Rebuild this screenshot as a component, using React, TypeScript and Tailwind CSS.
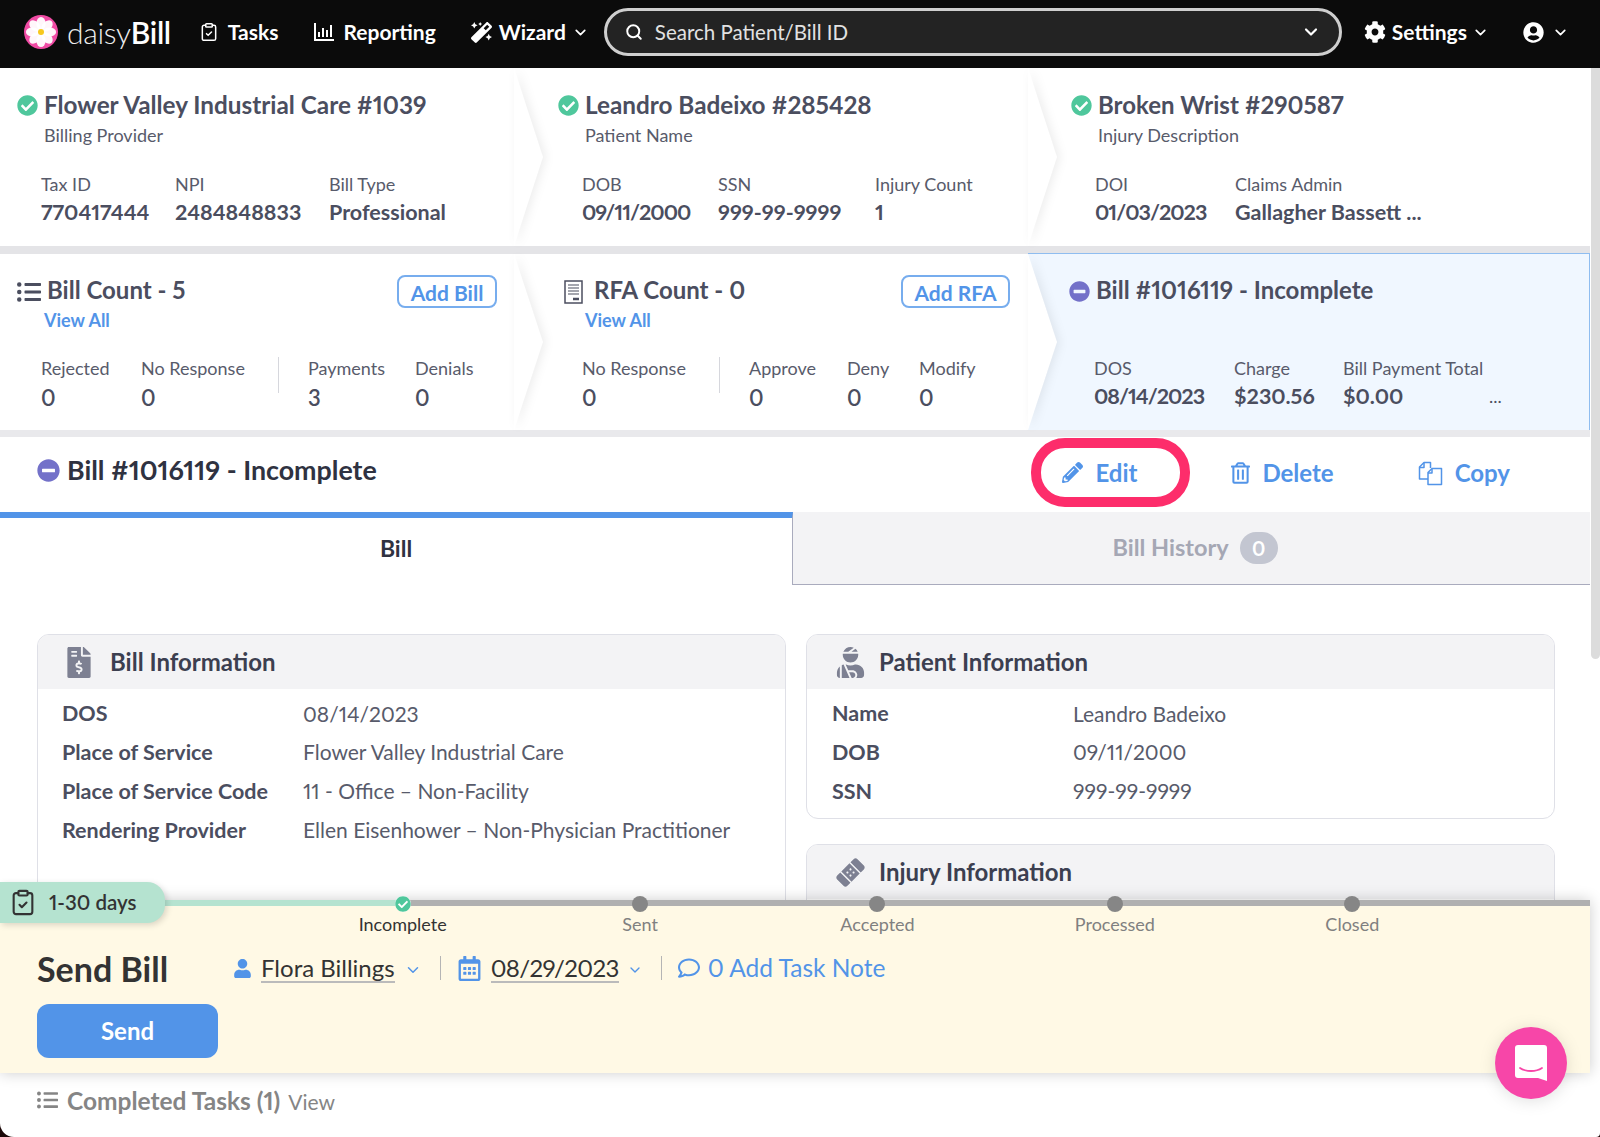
import React from 'react';
import {
  FaBandAid,
  FaCheckCircle,
  FaCog,
  FaFileInvoiceDollar,
  FaListUl,
  FaMagic,
  FaMinusCircle,
  FaPencilAlt,
  FaRegCalendarAlt,
  FaRegComment,
  FaRegTrashAlt,
  FaUser,
  FaUserCircle,
  FaUserInjured,
} from 'react-icons/fa';
import { ChevronDown, ClipboardCheck, Search } from 'lucide-react';

const Wedge = () => (
  <svg
    viewBox="0 0 29 100"
    preserveAspectRatio="none"
    className="absolute top-0 right-[-29px] z-10 h-full w-[29px] overflow-visible drop-shadow-[3px_0_5px_rgba(0,0,0,0.07)]"
  >
    <polygon points="0,0 29,50 0,100" fill="#fff" />
  </svg>
);

const Field = ({ label, value, w, date }: { label: string; value: string; w?: string; date?: boolean }) => (
  <div className={w}>
    <div className="text-[18px] leading-[22px] text-[#585b6b] whitespace-nowrap">{label}</div>
    <div className={`mt-[4px] text-[21.5px] leading-[26px] font-bold text-[#4b4e5f] whitespace-nowrap ${date ? 'tracking-[-1px]' : ''}`}>
      {value}
    </div>
  </div>
);

const Count = ({ label, value, w }: { label: string; value: string; w?: string }) => (
  <div className={w}>
    <div className="text-[18px] leading-[22px] text-[#585b6b] whitespace-nowrap">{label}</div>
    <div className="mt-[6px] text-[22px] leading-[26px] font-semibold text-[#4b4e5f] whitespace-nowrap">{value}</div>
  </div>
);

const TopCell = ({ title, sub, pad, children }: { title: string; sub: string; pad: string; children: React.ReactNode }) => (
  <div className={`relative w-[514px] h-full bg-white pt-[24px] ${pad}`}>
    <div className="flex items-center h-[26px] -ml-[24px]">
      <FaCheckCircle className="w-[21px] h-[21px] text-[#4fc79c] shrink-0" />
      <span className="ml-[6px] text-[24.3px] font-bold text-[#4b4e5f] whitespace-nowrap">{title}</span>
    </div>
    <div className="mt-[6px] ml-[3px] text-[18px] leading-[22px] text-[#585b6b]">{sub}</div>
    <div className="mt-[27px] flex">{children}</div>
    <Wedge />
  </div>
);

const AddButton = ({ label, w }: { label: string; w: string }) => (
  <button className={`h-[33px] rounded-[8px] border-2 border-[#77adee] bg-white pb-[3px] text-[21px] font-bold text-[#5294e8] ${w}`}>
    {label}
  </button>
);

const Row = ({ label, value }: { label: string; value: string }) => (
  <div className="flex h-[38.8px] items-center text-[21px]">
    <div className="w-[241px] text-[21.5px] font-bold text-[#4b4e5f] whitespace-nowrap">{label}</div>
    <div className="text-[#585b6b] whitespace-nowrap">{value}</div>
  </div>
);

const InfoCard = ({
  icon,
  title,
  className,
  children,
}: {
  icon: React.ReactNode;
  title: string;
  className?: string;
  children?: React.ReactNode;
}) => (
  <div className={`rounded-[12px] border border-[#dfe0e7] bg-white overflow-hidden ${className ?? ''}`}>
    <div className="flex h-[54px] items-center bg-[#f3f3f5] pl-[29px]">
      <div className="w-[43px] shrink-0">{icon}</div>
      <span className="text-[24px] font-bold text-[#3c3f50]">{title}</span>
    </div>
    {children}
  </div>
);

const NavItem = ({ icon, label, className }: { icon: React.ReactNode; label: string; className?: string }) => (
  <div className={`flex items-center text-[21px] font-bold text-white ${className ?? ''}`}>
    {icon}
    <span>{label}</span>
  </div>
);

const steps = ['Incomplete', 'Sent', 'Accepted', 'Processed', 'Closed'];

export default function App() {
  return (
    <div className="relative h-[1137px] w-[1600px] overflow-hidden bg-[#1c0808] font-['Lato',sans-serif] proportional-nums">
      <div className="flex h-full flex-col overflow-hidden rounded-bl-[14px] rounded-br-[4px] bg-white">
        <header className="flex h-[68px] shrink-0 items-center bg-[#0b0b0b] pb-[4px] pl-[24px]">
          <svg viewBox="0 0 34 34" className="h-[34px] w-[34px] shrink-0">
            <circle cx="17" cy="17" r="17" fill="#f04ba4" />
            {[0, 45, 90, 135, 180, 225, 270, 315].map((a) => (
              <ellipse key={a} cx="17" cy="8.5" rx="4.6" ry="6.6" fill="#fff" opacity="0.95" transform={`rotate(${a} 17 17)`} />
            ))}
            <circle cx="17" cy="17" r="3" fill="#f7c81e" />
          </svg>
          <div className="ml-[9px] text-[30px] font-light tracking-[-0.3px] text-[#eee]">
            daisy<span className="font-semibold text-white">Bill</span>
          </div>
          <NavItem
            className="ml-[28px]"
            icon={<ClipboardCheck className="mr-[9px] h-[24px] w-[20px]" strokeWidth={1.8} />}
            label="Tasks"
          />
          <NavItem
            className="ml-[36px]"
            icon={
              <svg viewBox="0 0 20 18" className="mr-[9px] h-[18px] w-[20px]" fill="#fff">
                <path d="M0 0h2v16h18v2H0z" />
                <path d="M4 9h2v5H4zM8 5h2v9H8zM12 7h2v7h-2zM16 2h2v12h-2z" />
              </svg>
            }
            label="Reporting"
          />
          <NavItem className="ml-[35px]" icon={<FaMagic className="mr-[7px] h-[21px] w-[21px]" />} label="Wizard" />
          <ChevronDown className="ml-[6px] h-[17px] w-[17px] text-white" strokeWidth={2.4} />
          <div className="ml-[15px] flex h-[48px] w-[738px] items-center rounded-full border-[3px] border-[#cfcfcf] bg-[#232323] pl-[18px] pr-[18px]">
            <Search className="h-[18px] w-[18px] text-white" strokeWidth={2.6} />
            <span className="ml-[12px] text-[20.5px] text-[#e2e2e2]">Search Patient/Bill ID</span>
            <ChevronDown className="ml-auto h-[20px] w-[20px] text-white" strokeWidth={2.6} />
          </div>
          <NavItem className="ml-[22px]" icon={<FaCog className="mr-[6px] h-[22px] w-[22px]" />} label="Settings" />
          <ChevronDown className="ml-[5px] h-[17px] w-[17px] text-white" strokeWidth={2.4} />
          <FaUserCircle className="ml-[34px] h-[21px] w-[21px] text-white" />
          <ChevronDown className="ml-[8px] h-[17px] w-[17px] text-white" strokeWidth={2.4} />
        </header>

        <div className="flex min-h-0 flex-1">
          <main className="flex w-[1590px] flex-col">
            <div className="flex min-h-0 flex-1 flex-col overflow-hidden">
              <div className="flex h-[178px] shrink-0">
                <TopCell title="Flower Valley Industrial Care #1039" sub="Billing Provider" pad="pl-[41px]">
                  <Field label="Tax ID" value="770417444" w="w-[134px]" />
                  <Field label="NPI" value="2484848833" w="w-[154px]" />
                  <Field label="Bill Type" value="Professional" />
                </TopCell>
                <TopCell title="Leandro Badeixo #285428" sub="Patient Name" pad="pl-[68px]">
                  <Field label="DOB" value="09/11/2000" w="w-[136px]" date />
                  <Field label="SSN" value="999-99-9999" w="w-[157px]" />
                  <Field label="Injury Count" value="1" />
                </TopCell>
                <div className="flex-1 bg-white pl-[67px] pt-[24px]">
                  <div className="-ml-[24px] flex h-[26px] items-center">
                    <FaCheckCircle className="h-[21px] w-[21px] shrink-0 text-[#4fc79c]" />
                    <span className="ml-[6px] text-[24px] font-bold text-[#4b4e5f]">Broken Wrist #290587</span>
                  </div>
                  <div className="ml-[3px] mt-[6px] text-[18px] leading-[22px] text-[#585b6b]">Injury Description</div>
                  <div className="mt-[27px] flex">
                    <Field label="DOI" value="01/03/2023" w="w-[140px]" date />
                    <Field label="Claims Admin" value="Gallagher Bassett ..." />
                  </div>
                </div>
              </div>
              <div className="h-[8px] shrink-0 bg-[#e4e4e7]" />

              <div className="flex h-[176px] shrink-0">
                <div className="relative h-full w-[514px] bg-white pl-[41px] pr-[17px] pt-[21px]">
                  <div className="-ml-[24px] flex h-[33px] items-center">
                    <FaListUl className="h-[24px] w-[24px] text-[#4b4e5f]" />
                    <span className="mb-[3px] ml-[6px] text-[24px] font-bold text-[#4b4e5f]">Bill Count - 5</span>
                    <div className="ml-auto">
                      <AddButton label="Add Bill" w="w-[100px]" />
                    </div>
                  </div>
                  <div className="ml-[3px] mt-[1px] text-[18px] font-bold leading-[22px] text-[#5294e8]">View All</div>
                  <div className="mt-[26px] flex">
                    <Count label="Rejected" value="0" w="w-[100px]" />
                    <Count label="No Response" value="0" w="w-[137px]" />
                    <div className="mr-[29px] h-[36px] w-px bg-[#d6d7dd]" />
                    <Count label="Payments" value="3" w="w-[107px]" />
                    <Count label="Denials" value="0" />
                  </div>
                  <Wedge />
                </div>
                <div className="relative h-full w-[514px] bg-white pl-[68px] pr-[18px] pt-[21px]">
                  <div className="-ml-[18px] flex h-[33px] items-center">
                    <svg viewBox="0 0 19 24" className="h-[24px] w-[19px] text-[#4b4e5f]" fill="none" stroke="currentColor">
                      <rect x="1" y="1" width="17" height="22" strokeWidth="1.5" />
                      <path d="M4 5h11M4 8h11M4 11h11M4 14h11" strokeWidth="1.2" />
                      <path d="M9 19h6" strokeWidth="2.5" />
                    </svg>
                    <span className="mb-[3px] ml-[11px] text-[24px] font-bold text-[#4b4e5f]">RFA Count - 0</span>
                    <div className="ml-auto">
                      <AddButton label="Add RFA" w="w-[109px]" />
                    </div>
                  </div>
                  <div className="ml-[3px] mt-[1px] text-[18px] font-bold leading-[22px] text-[#5294e8]">View All</div>
                  <div className="mt-[26px] flex">
                    <Count label="No Response" value="0" w="w-[137px]" />
                    <div className="mr-[29px] h-[36px] w-px bg-[#d6d7dd]" />
                    <Count label="Approve" value="0" w="w-[98px]" />
                    <Count label="Deny" value="0" w="w-[72px]" />
                    <Count label="Modify" value="0" />
                  </div>
                  <Wedge />
                </div>
                <div className="-my-px h-[178px] flex-1 border-y border-r border-[#8fbdf0] bg-[#f0f7ff] pl-[66px] pt-[21px]">
                  <div className="-ml-[25px] flex h-[33px] items-center">
                    <FaMinusCircle className="h-[21px] w-[21px] text-[#7371c9]" />
                    <span className="mb-[3px] ml-[6px] text-[24px] font-bold text-[#4b4e5f]">Bill #1016119 - Incomplete</span>
                  </div>
                  <div className="mt-[49px] flex">
                    <Field label="DOS" value="08/14/2023" w="w-[140px]" date />
                    <Field label="Charge" value="$230.56" w="w-[109px]" />
                    <Field label="Bill Payment Total" value="$0.00" w="w-[146px]" />
                    <div className="self-end pb-[2px] text-[18px] leading-[22px] text-[#4b4e5f]">...</div>
                  </div>
                </div>
              </div>
              <div className="h-[7px] shrink-0 bg-[#e9e9ec]" />

              <div className="flex h-[75px] shrink-0 items-start pl-[37px]">
                <div className="mt-[20px] flex h-[26px] items-center">
                  <FaMinusCircle className="h-[23px] w-[23px] text-[#7371c9]" />
                  <span className="ml-[7px] text-[26.8px] font-bold text-[#2f3241]">Bill #1016119 - Incomplete</span>
                </div>
                <div className="ml-auto mr-[80px] flex items-center text-[24px] font-bold text-[#5294e8]">
                  <div className="mt-[1px] flex h-[69px] w-[159px] items-center rounded-[34px] border-[10px] border-[#fd2d6b] pl-[21px]">
                    <FaPencilAlt className="h-[21px] w-[21px]" />
                    <span className="ml-[12px]">Edit</span>
                  </div>
                  <div className="ml-[41px] mt-[2px] flex items-center">
                    <FaRegTrashAlt className="h-[22px] w-[19px]" />
                    <span className="ml-[12px]">Delete</span>
                  </div>
                  <div className="ml-[84px] mt-[2px] flex items-center">
                    <svg viewBox="0 0 25 25" className="h-[25px] w-[25px]" fill="none" stroke="currentColor" strokeWidth="1.5" strokeLinejoin="round">
                      <path d="M10 18H1.5V6L6 1.5h6.500V7" />
                      <path d="M6 2v4.500H1.500" />
                      <path d="M14 7.500h9.500V23.500H10V11.500z" />
                      <path d="M14 8v4h-4" />
                    </svg>
                    <span className="ml-[12px]">Copy</span>
                  </div>
                </div>
              </div>

              <div className="flex h-[73px] shrink-0">
                <div className="flex w-[793px] items-center justify-center border-r border-[#a9abbd] border-t-[6px] border-t-[#5294e8] pb-[7px] text-[23px] font-bold text-[#2f3241]">
                  Bill
                </div>
                <div className="flex flex-1 items-center justify-center border-b border-[#a9abbd] bg-[#f3f3f5] pl-[7px] text-[23.5px] font-bold text-[#a5a7b4]">
                  Bill History
                  <span className="ml-[11px] flex h-[32px] w-[38px] items-center justify-center rounded-full bg-[#c3c6d1] text-[20px] text-white">0</span>
                </div>
              </div>

              <div className="grid min-h-0 flex-1 grid-cols-[749px_749px] gap-x-[20px] pl-[37px] pt-[49px]">
                <InfoCard
                  className="h-[400px]"
                  icon={<FaFileInvoiceDollar className="h-[31px] w-[24px] text-[#7d8092]" />}
                  title="Bill Information"
                >
                  <div className="pl-[24px] pt-[5px]">
                    <Row label="DOS" value="08/14/2023" />
                    <Row label="Place of Service" value="Flower Valley Industrial Care" />
                    <Row label="Place of Service Code" value="11 - Office – Non-Facility" />
                    <Row label="Rendering Provider" value="Ellen Eisenhower – Non-Physician Practitioner" />
                  </div>
                </InfoCard>
                <div className="flex flex-col gap-[25px]">
                  <InfoCard
                    className="h-[185px] shrink-0"
                    icon={<FaUserInjured className="h-[31px] w-[29px] text-[#7d8092]" />}
                    title="Patient Information"
                  >
                    <div className="pl-[25px] pt-[5px]">
                      <Row label="Name" value="Leandro Badeixo" />
                      <Row label="DOB" value="09/11/2000" />
                      <Row label="SSN" value="999-99-9999" />
                    </div>
                  </InfoCard>
                  <InfoCard
                    className="h-[200px] shrink-0"
                    icon={<FaBandAid className="h-[29px] w-[29px] -rotate-45 text-[#7d8092]" />}
                    title="Injury Information"
                  />
                </div>
              </div>
            </div>

            <section className="relative z-20 h-[173px] shrink-0 bg-[#fff9e5] shadow-[0_0_14px_rgba(0,0,0,0.2)]">
              <div className="absolute left-0 top-[-18px] flex h-[41px] w-[165px] items-center rounded-r-[18px] bg-[#b5e3d0] pl-[9px] shadow-[2px_2px_6px_rgba(0,0,0,0.15)]">
                <ClipboardCheck className="h-[33px] w-[28px] text-[#333]" strokeWidth={1.8} />
                <span className="ml-[12px] text-[20.5px] font-semibold text-[#333]">1-30 days</span>
              </div>
              <div className="flex h-[6px]">
                <div className="w-[403px] bg-[#b5e3d0]" />
                <div className="flex-1 bg-[#b0b0b0]" />
              </div>
              <div className="relative -mt-[10px] ml-[284px] grid w-[1187px] grid-cols-5">
                {steps.map((s, i) => (
                  <div key={s} className="flex flex-col items-center">
                    {i === 0 ? (
                      <span className="flex h-[16px] w-[16px] items-center justify-center rounded-full bg-white">
                        <FaCheckCircle className="h-[16px] w-[16px] text-[#4fc79c]" />
                      </span>
                    ) : (
                      <span className="h-[16px] w-[16px] rounded-full bg-[#868686]" />
                    )}
                    <span className={`mt-[1px] text-[18px] leading-[22px] ${i === 0 ? 'text-[#333]' : 'text-[#808080]'}`}>{s}</span>
                  </div>
                ))}
              </div>
              <div className="mt-[13px] flex h-[40px] items-center pl-[37px]">
                <div className="w-[197px] text-[34px] font-bold text-[#333]">Send Bill</div>
                <FaUser className="h-[19px] w-[17px] text-[#5294e8]" />
                <span className="ml-[10px] whitespace-nowrap border-b-2 border-[#bbb] text-[24px] leading-[27px] text-[#333]">Flora Billings</span>
                <ChevronDown className="ml-[9px] mt-[3px] h-[18px] w-[18px] text-[#5294e8]" />
                <div className="ml-[18px] h-[24px] w-px bg-[#b5b5b5]" />
                <FaRegCalendarAlt className="ml-[17px] h-[25px] w-[23px] text-[#5294e8]" />
                <span className="ml-[10px] border-b-2 border-[#bbb] text-[24px] leading-[27px] tracking-[-0.6px] text-[#333]">08/29/2023</span>
                <ChevronDown className="ml-[8px] mt-[3px] h-[16px] w-[16px] text-[#5294e8]" />
                <div className="ml-[18px] h-[24px] w-px bg-[#b5b5b5]" />
                <FaRegComment className="ml-[15px] h-[22px] w-[24px] text-[#5294e8]" />
                <span className="ml-[7px] text-[24.5px] text-[#5294e8]">0 Add Task Note</span>
              </div>
              <button className="ml-[37px] mt-[16px] h-[54px] w-[181px] rounded-[12px] bg-[#5294e8] text-[24px] font-bold text-white">
                Send
              </button>
            </section>

            <div className="flex h-[64px] shrink-0 items-start pl-[37px] pt-[10px] text-[#858585]">
              <FaListUl className="mt-[6px] h-[22px] w-[21px]" />
              <span className="ml-[9px] text-[24.5px] font-bold">Completed Tasks (1)</span>
              <span className="ml-[8px] mt-[3px] text-[21px]">View</span>
            </div>
          </main>
          <div className="w-[10px] shrink-0 pl-px">
            <div className="h-[591px] rounded-b-[5px] bg-[#dcdcdc]" />
          </div>
        </div>
      </div>

      <svg viewBox="0 0 72 72" className="absolute left-[1495px] top-[1027px] z-30 h-[72px] w-[72px] drop-shadow-[0_2px_8px_rgba(0,0,0,0.12)]">
        <circle cx="36" cy="36" r="36" fill="#f746a8" />
        <path d="M23 18h26a3 3 0 0 1 3 3v33l-9-3H23a3 3 0 0 1-3-3V21a3 3 0 0 1 3-3z" fill="#fff" />
        <path d="M25 41c6 4 16 4 22 0" fill="none" stroke="#f746a8" strokeWidth="1.8" strokeLinecap="round" />
      </svg>
    </div>
  );
}
